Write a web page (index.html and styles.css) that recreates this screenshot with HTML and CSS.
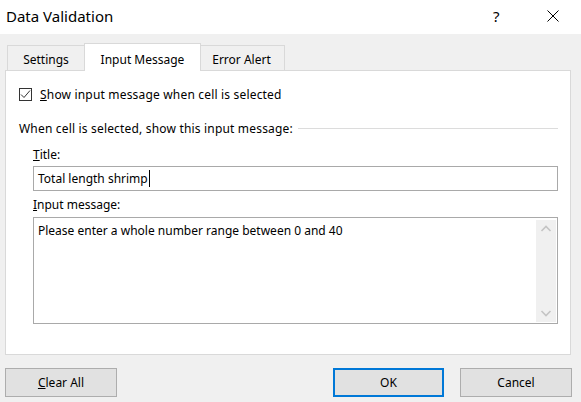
FILE: index.html
```html
<!DOCTYPE html>
<html lang="en">
<head>
<meta charset="utf-8">
<title>Data Validation</title>
<link rel="stylesheet" href="styles.css">
</head>
<body>
<div class="dialog">
  <div class="titlebar">
    <div class="title">Data Validation</div>
    <div class="help">?</div>
    <div class="close">
      <svg width="12" height="12" viewBox="0 0 12 12"><path d="M0.5 0.5 L11.5 11.5 M11.5 0.5 L0.5 11.5" stroke="#000" stroke-width="1" fill="none"/></svg>
    </div>
  </div>
  <div class="content">
    <div class="tabs">
      <div class="tab tab-first">Settings</div>
      <div class="tab tab-active">Input Message</div>
      <div class="tab tab-last">Error Alert</div>
    </div>
    <div class="panel">
      <div class="check-row">
        <span class="checkbox">
          <svg width="11" height="11" viewBox="0 0 11 11"><path d="M1 5.5 L4 8.5 L10 1.5" stroke="#333" stroke-width="1" fill="none"/></svg>
        </span>
        <span class="wide"><u>S</u>how input message when cell is selected</span>
      </div>
      <div class="section">
        <span class="wide">When cell is selected, show this input message:</span>
        <span class="rule"></span>
      </div>
      <div class="label label-title"><u>T</u>itle:</div>
      <div class="input"><span>Total length shrimp</span><span class="caret"></span></div>
      <div class="label label-msg"><u>I</u>nput message:</div>
      <div class="textarea">
        <div class="ta-text">Please enter a whole number range between 0 and 40</div>
        <div class="scrollbar">
          <svg width="20" height="18" viewBox="0 0 20 18"><path d="M5.5 11 L10 6.5 L14.5 11" stroke="#c4c4c4" stroke-width="1.6" fill="none"/></svg>
          <svg width="20" height="18" viewBox="0 0 20 18"><path d="M5.5 7 L10 11.5 L14.5 7" stroke="#c4c4c4" stroke-width="1.6" fill="none"/></svg>
        </div>
      </div>
    </div>
    <div class="buttons">
      <div class="btn"><u>C</u>lear All</div>
      <div class="spacer"></div>
      <div class="btn btn-default">OK</div>
      <div class="btn">Cancel</div>
    </div>
  </div>
</div>
</body>
</html>
```
FILE: styles.css
```css
html, body {
  margin: 0;
  padding: 0;
  background: #f0f0f0;
}
.dialog {
  width: 581px;
  height: 402px;
  font-family: "Noto Sans", "Open Sans", sans-serif;
  font-size: 12px;
  color: #000;
  display: flex;
  flex-direction: column;
}
.titlebar {
  height: 34px;
  background: #fff;
  display: flex;
  align-items: center;
  flex: none;
}
.title {
  font-size: 15px;
  margin-left: 6px;
  flex: 1;
  margin-top: -3px;
}
.help {
  font-size: 15px;
  width: 14px;
  margin-right: 40px;
  margin-top: -3px;
}
.close {
  width: 12px;
  height: 12px;
  margin-right: 22px;
  margin-top: -3px;
  display: flex;
}
.content {
  flex: 1;
  background: #f0f0f0;
  padding: 9px 9px 0 5px;
  display: flex;
  flex-direction: column;
}
.tabs {
  display: flex;
  align-items: flex-end;
  padding-left: 2px;
  height: 27px;
}
.tab {
  height: 25px;
  box-sizing: border-box;
  border: 1px solid #d9d9d9;
  border-bottom: none;
  background: #f0f0f0;
  display: flex;
  align-items: center;
  justify-content: center;
  padding-top: 3px;
}
.tab-first {
  width: 77px;
  border-right: none;
}
.tab-active {
  width: 117px;
  height: 28px;
  background: #fff;
  position: relative;
  z-index: 1;
  margin-bottom: -1px;
  padding-top: 3px;
}
.tab-last {
  width: 84px;
  border-left: none;
  padding-right: 2px;
}
.panel {
  height: 285px;
  box-sizing: border-box;
  margin-right: 1px;
  background: #fff;
  border: 1px solid #d9d9d9;
  padding: 15px 12px 0 13px;
  display: flex;
  flex-direction: column;
}
.wide {
  letter-spacing: 0.18px;
}
.check-row {
  display: flex;
  align-items: center;
  height: 16px;
}
.checkbox {
  width: 13px;
  height: 13px;
  box-sizing: border-box;
  border: 1px solid #333;
  margin-right: 8px;
  display: flex;
  align-items: center;
  justify-content: center;
  background: #fff;
}
.section {
  display: flex;
  align-items: center;
  height: 16px;
  margin-top: 18px;
}
.rule {
  flex: 1;
  height: 1px;
  background: #dcdcdc;
  margin-left: 5px;
}
.label {
  height: 16px;
  line-height: 16px;
  margin-left: 14px;
}
.label-title {
  margin-top: 11px;
}
.label-msg {
  margin-top: 6px;
}
.input {
  margin-left: 14px;
  margin-top: 3px;
  height: 25px;
  box-sizing: border-box;
  border: 1px solid #a9a9a9;
  display: flex;
  align-items: center;
  padding-left: 4px;
}
.caret {
  width: 1px;
  height: 17px;
  background: #000;
  margin-left: 1px;
}
.textarea {
  margin-left: 14px;
  margin-top: 4px;
  height: 107px;
  box-sizing: border-box;
  border: 1px solid #a9a9a9;
  display: flex;
}
.ta-text {
  flex: 1;
  padding: 4px 0 0 4px;
}
.scrollbar {
  width: 20px;
  margin: 2px 1px 1px 0;
  background: #f0f0f0;
  display: flex;
  flex-direction: column;
  justify-content: space-between;
}
.buttons {
  display: flex;
  margin-top: 13px;
}
.btn {
  width: 112px;
  height: 29px;
  box-sizing: border-box;
  border: 1px solid #adadad;
  background: #e1e1e1;
  display: flex;
  align-items: center;
  justify-content: center;
}
.spacer {
  flex: 1;
}
.btn-default {
  width: 111px;
  border: 2px solid #0078d7;
  margin-right: 16px;
}
```
